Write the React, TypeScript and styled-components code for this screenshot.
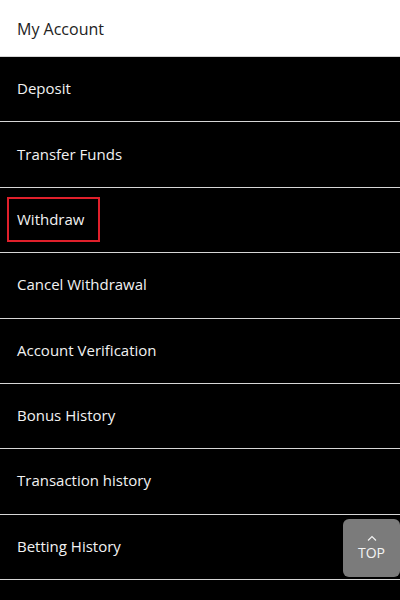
import React from "react";
import styled, {createGlobalStyle} from "styled-components";

const GlobalStyle = createGlobalStyle`
    html, body {
        margin: 0;
        padding: 0;
        background: #000;
        font-family: "Open Sans", "Liberation Sans", sans-serif;
    }
`;

const Page = styled.div`
    width: 400px;
    height: 600px;
    overflow: hidden;
    background: #000;
`;

const Header = styled.div`
    height: 56px;
    display: flex;
    align-items: center;
    padding: 2px 0 0 17px;
    box-sizing: border-box;
    background: #fff;
    color: #222;
    font-size: 16px;
`;

const MenuList = styled.ul`
    list-style: none;
    margin: 0;
    padding: 0;
`;

const MenuItem = styled.li`
    box-sizing: border-box;
    height: 65.375px;
    display: flex;
    align-items: center;
    padding: 0 0 2px 17px;
    border-top: 1px solid #d6d6d6;
    color: #f2f2f2;
    font-size: 15px;
`;

const Label = styled.span<{ $highlight?: boolean }>`
    ${({ $highlight }) => $highlight && `
        display: inline-flex;
        align-items: center;
        box-sizing: border-box;
        height: 45px;
        margin: 2px 0 0 -10px;
        padding: 0 14px 2px 8px;
        border: 2px solid #e0202b;
    `}
`;

const TopButton = styled.button`
    position: fixed;
    right: 0;
    top: 519px;
    width: 57px;
    height: 58px;
    border: none;
    border-radius: 6px;
    background: #7b7b7b;
    color: #f4f4f4;
    display: flex;
    flex-direction: column;
    align-items: center;
    justify-content: center;
    font-family: "Open Sans", "Liberation Sans", sans-serif;
    font-size: 14px;
    padding: 0;
    cursor: pointer;
`;

const Caret = styled.svg`
    width: 10px;
    height: 6px;
    margin-bottom: 2px;
`;

const items = [
    "Deposit",
    "Transfer Funds",
    "Withdraw",
    "Cancel Withdrawal",
    "Account Verification",
    "Bonus History",
    "Transaction history",
    "Betting History",
    "",
];

export default function App() {
    return (
        <Page>
            <GlobalStyle/>
            <Header>My Account</Header>
            <MenuList>
                {items.map((name, i) => (
                    <MenuItem key={i}>
                        <Label $highlight={name === "Withdraw"}>{name}</Label>
                    </MenuItem>
                ))}
            </MenuList>
            <TopButton>
                <Caret viewBox="0 0 10 6">
                    <path d="M1 5.5 L5 1.5 L9 5.5" fill="none" stroke="#f4f4f4" strokeWidth="1.1"/>
                </Caret>
                TOP
            </TopButton>
        </Page>
    );
}
